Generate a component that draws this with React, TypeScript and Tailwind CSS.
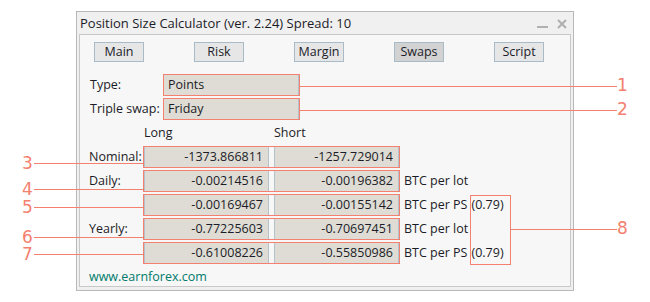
import React from "react";

const red = "border-[#f4806f]";

const tabs = ["Main", "Risk", "Margin", "Swaps", "Script"];

// rows of swap values: label, long, short, unit, extra
const rows = [
	{ label: "Nominal:", long: "-1373.866811", short: "-1257.729014", unit: "", extra: "" },
	{ label: "Daily:", long: "-0.00214516", short: "-0.00196382", unit: "BTC per lot", extra: "" },
	{ label: "", long: "-0.00169467", short: "-0.00155142", unit: "BTC per PS", extra: "(0.79)" },
	{ label: "Yearly:", long: "-0.77225603", short: "-0.70697451", unit: "BTC per lot", extra: "" },
	{ label: "", long: "-0.61008226", short: "-0.55850986", unit: "BTC per PS", extra: "(0.79)" },
];

const Field = ({ value }: { value: string }) => (
	<div className="w-[125px] h-full bg-[#dedcd4] border-x border-[#b4c2cc] flex items-center justify-end pr-[5px]">
		{value}
	</div>
);

const num = "text-[17px] leading-[13px] text-[#f4806f]";

export default function App() {
	return (
		<div
			className="relative w-[650px] h-[302px] bg-white text-[12.5px] text-[#1c1c28] overflow-hidden"
			style={{ fontFamily: "'Open Sans', 'DejaVu Sans', sans-serif" }}
		>
			<div className="absolute left-[76px] top-[11px] w-[498px] h-[280px] border border-[#b8b8b8] bg-[#f0f0f0] flex flex-col">
				<div className="h-[22px] flex items-center justify-between pl-[3px] pr-[6px] text-[13px] pt-[1px]">
					<span>Position Size Calculator (ver. 2.24) Spread: 10</span>
					<div className="flex items-center gap-[9px] text-[#a8a8a8]">
						<div className="w-[11px] h-[2px] bg-[#b0b0b0] mt-[7px]" />
						<svg width="10" height="10" viewBox="0 0 10 10">
							<path d="M1 1 L9 9 M9 1 L1 9" stroke="#b0b0b0" strokeWidth="2.2" />
						</svg>
					</div>
				</div>
				<div className="mx-[2px] h-[253px] border border-[#c8c8c8] bg-[#f7f7f7] pt-[7px]">
					<div className="flex gap-[50px] pl-[14px]">
						{tabs.map((t) => (
							<div
								key={t}
								className={`w-[50px] h-[20px] border border-[#aabbc8] flex items-center justify-center ${
									t === "Swaps" ? "bg-[#d2d2d2]" : "bg-[#e6e6e6]"
								}`}
							>
								{t}
							</div>
						))}
					</div>

					<div className="flex flex-col gap-[2px] mt-[12px]">
						<div className="flex h-[22px] items-center pl-[10px]">
							<span className="w-[73px]">Type:</span>
							<div className={`w-[137px] h-full border ${red}`}>
								<div className="h-full bg-[#dedcd4] border-r border-[#b4c2cc] flex items-center pl-[4px]">Points</div>
							</div>
						</div>
						<div className="flex h-[22px] items-center pl-[10px]">
							<span className="w-[73px]">Triple swap:</span>
							<div className={`w-[137px] h-full border ${red}`}>
								<div className="h-full bg-[#dedcd4] border-r border-[#b4c2cc] flex items-center pl-[4px]">Friday</div>
							</div>
						</div>
						<div className="flex h-[22px] items-center pl-[64px]">
							<span className="w-[130px]">Long</span>
							<span>Short</span>
						</div>
						{rows.map((r, i) => (
							<div key={i} className="flex h-[22px] items-center pl-[9px]">
								<span className="w-[54px]">{r.label}</span>
								<div className={`flex gap-[5px] h-full w-[257px] border ${red}`}>
									<Field value={r.long} />
									<Field value={r.short} />
								</div>
								<span className="ml-[4px]">{r.unit}</span>
								{r.extra && <span className="ml-[4px]">{r.extra}</span>}
							</div>
						))}
					</div>

					<div className="pl-[9px] mt-[4px] text-[#007a6a]">www.earnforex.com</div>
				</div>
			</div>

			{/* annotations */}
			<div className="absolute left-[299px] top-[86px] w-[318px] h-px bg-[#f4806f]" />
			<div className="absolute left-[299px] top-[110px] w-[318px] h-px bg-[#f4806f]" />
			<span className={`absolute left-[617px] top-[79px] ${num}`} style={{ fontFamily: "'DejaVu Sans', sans-serif" }}>1</span>
			<span className={`absolute left-[617px] top-[103px] ${num}`} style={{ fontFamily: "'DejaVu Sans', sans-serif" }}>2</span>

			<div className="absolute left-[470px] top-[195px] w-[41px] h-[70px] border border-[#f4806f]" />
			<div className="absolute left-[511px] top-[229px] w-[106px] h-px bg-[#f4806f]" />
			<span className={`absolute left-[617px] top-[222px] ${num}`} style={{ fontFamily: "'DejaVu Sans', sans-serif" }}>8</span>

			{[
				["3", 163],
				["4", 189],
				["5", 207],
				["6", 237],
				["7", 254],
			].map(([n, y]) => (
				<div key={n} className="absolute left-[22px] flex items-center" style={{ top: (y as number) - 6, fontFamily: "'DejaVu Sans', sans-serif" }}>
					<span className={`w-[12px] ${num}`}>{n}</span>
					<div className="w-[109px] h-px bg-[#f4806f]" />
				</div>
			))}
		</div>
	);
}
